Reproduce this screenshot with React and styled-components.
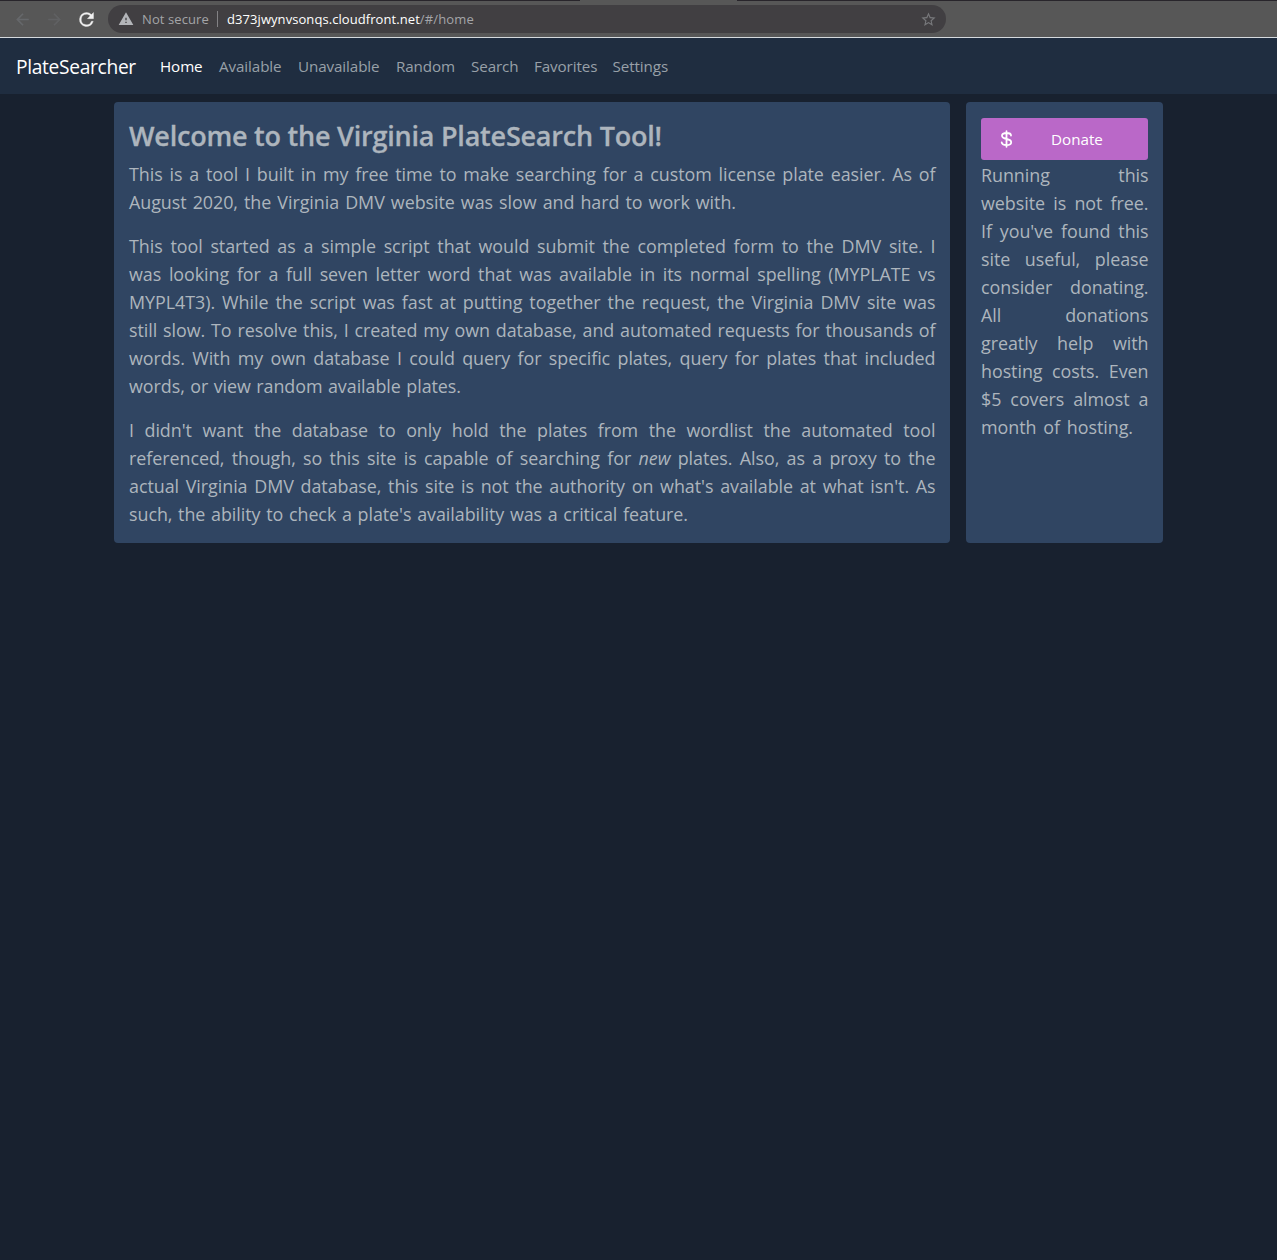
import React from "react";
import styled, { createGlobalStyle } from "styled-components";

const GlobalStyle = createGlobalStyle`
  *, *::before, *::after { box-sizing: border-box; }
  html { background: #18212f; }
  body {
    margin: 0;
    background: #18212f;
    color: #adb5bd;
    font-family: "Segoe UI", "Open Sans", "Noto Sans", sans-serif;
  }
`;

const Page = styled.div`
  min-height: 1260px;
`;

const Browser = styled.header`
  height: 38px;
  display: flex;
  flex-direction: column;
  background: #575757;
  border-bottom: 1px solid #d5dade;
`;

const TabEdge = styled.div`
  height: 1px;
  flex: none;
  background: linear-gradient(to right, #28252b 580px, #575757 580px 737px, #28252b 737px);
`;

const Toolbar = styled.div`
  flex: 1;
  display: flex;
  align-items: center;
  padding-left: 13px;
`;

const ToolIcon = styled.svg`
  display: block;
  flex: none;
  width: ${(p) => p.$size}px;
  height: ${(p) => p.$size}px;
  margin-right: ${(p) => p.$gap || 0}px;
  fill: ${(p) => p.$color};
`;

const AddressBar = styled.div`
  display: flex;
  align-items: center;
  width: 838px;
  height: 28px;
  padding: 0 9px 0 10px;
  border-radius: 14px;
  background: #413f42;
  color: #a4a5a8;
  font-size: 13px;
  line-height: 28px;
  white-space: nowrap;
`;

const Security = styled.span`
  width: 67px;
  letter-spacing: 0.1px;
`;

const Divider = styled.span`
  width: 1px;
  height: 16px;
  margin: 0 9px 0 8px;
  background: #838285;
`;

const Url = styled.span`
  flex: 1;
  letter-spacing: 0.15px;
`;

const Host = styled.span`
  color: #fff;
  letter-spacing: 0.07px;
`;

const Navbar = styled.nav`
  display: flex;
  align-items: center;
  height: 56px;
  padding: 0 16px;
  background: #1f2d40;
  white-space: nowrap;
`;

const Brand = styled.a`
  width: 120px;
  margin-right: 16px;
  padding-top: 1px;
  color: #fff;
  font-size: 19.2px;
  line-height: 30px;
  letter-spacing: -0.32px;
`;

const NavLink = styled.a`
  width: ${(p) => p.$width}px;
  padding: 0 8px;
  color: ${(p) => (p.$active ? "#fff" : "#98a0a8")};
  font-size: 15.2px;
  line-height: 24px;
  letter-spacing: -0.1px;
`;

const Container = styled.main`
  display: flex;
  gap: 16px;
  width: 1049px;
  height: 441px;
  margin: 8px 114px 0;
`;

const Card = styled.section`
  width: ${(p) => p.$width}px;
  padding: 16px 14.5px 15px 15px;
  border-radius: 4px;
  background: #304562;
`;

const Title = styled.h1`
  margin: 0 0 7px;
  padding-top: 1px;
  font-size: 27px;
  font-weight: 600;
  line-height: 34px;
  letter-spacing: -0.22px;
  white-space: nowrap;
  -webkit-text-stroke: 0.3px currentColor;
`;

const Paragraph = styled.p`
  margin: 0 0 16px;
  font-size: 17.9px;
  line-height: 28px;
  letter-spacing: -0.05px;
  word-spacing: -1.5px;
`;

const Line = styled.span`
  display: block;
  width: ${(p) => (p.$width ? `${p.$width}px` : "100%")};
  text-align: justify;
  text-align-last: justify;
`;

const DonateButton = styled.button`
  display: flex;
  align-items: center;
  width: 167px;
  height: 42px;
  margin: 0 0 1px;
  padding: 0 18px;
  border: 0;
  border-radius: 3px;
  background: #ba68c8;
  color: #fff;
  font: 400 15.2px/24px "Segoe UI", "Open Sans", "Noto Sans", sans-serif;
  letter-spacing: 0;
`;

const DollarIcon = styled.svg`
  display: block;
  width: 15px;
  height: 18px;
  margin-right: 37px;
  fill: none;
  stroke: #fff;
  stroke-width: 1.8;
  stroke-linecap: round;
`;

const links = [
  ["Home", 59],
  ["Available", 79],
  ["Unavailable", 98],
  ["Random", 75],
  ["Search", 63],
  ["Favorites", 78.5],
  ["Settings", 74],
];

const intro = [
  [
    ["This is a tool I built in my free time to make searching for a custom license plate easier. As of"],
    ["August 2020, the Virginia DMV website was slow and hard to work with.", 607],
  ],
  [
    ["This tool started as a simple script that would submit the completed form to the DMV site. I"],
    ["was looking for a full seven letter word that was available in its normal spelling (MYPLATE vs"],
    ["MYPL4T3). While the script was fast at putting together the request, the Virginia DMV site was"],
    ["still slow. To resolve this, I created my own database, and automated requests for thousands of"],
    ["words. With my own database I could query for specific plates, query for plates that included"],
    ["words, or view random available plates.", 332],
  ],
  [
    ["I didn't want the database to only hold the plates from the wordlist the automated tool"],
    [<>referenced, though, so this site is capable of searching for <em>new</em> plates. Also, as a proxy to the</>],
    ["actual Virginia DMV database, this site is not the authority on what's available at what isn't. As"],
    ["such, the ability to check a plate's availability was a critical feature.", 559],
  ],
];

const appeal = [
  ["Running this"],
  ["website is not free."],
  ["If you've found this"],
  ["site useful, please"],
  ["consider donating."],
  ["All donations"],
  ["greatly help with"],
  ["hosting costs. Even"],
  ["$5 covers almost a"],
  ["month of hosting.", 152],
];

function Lines({ lines }) {
  return (
    <Paragraph>
      {lines.map(([text, width], i) => (
        <Line key={i} $width={width}>{text}</Line>
      ))}
    </Paragraph>
  );
}

export default function App() {
  return (
    <Page>
      <GlobalStyle />
      <Browser>
        <TabEdge />
        <Toolbar>
          <ToolIcon viewBox="0 0 24 24" $size={19} $gap={13} $color="#66686b">
            <path d="M20 11H7.83l5.59-5.59L12 4l-8 8 8 8 1.41-1.41L7.83 13H20v-2z" />
          </ToolIcon>
          <ToolIcon viewBox="0 0 24 24" $size={19} $gap={11.5} $color="#606163">
            <path d="M12 4l-1.41 1.41L16.17 11H4v2h12.17l-5.58 5.59L12 20l8-8z" />
          </ToolIcon>
          <ToolIcon viewBox="0 0 24 24" $size={21} $gap={11.5} $color="#f1f1f1">
            <path d="M17.65 6.35A7.96 7.96 0 0 0 12 4a8 8 0 1 0 7.73 10h-2.08A6 6 0 1 1 12 6c1.66 0 3.14.69 4.22 1.78L13 11h7V4l-2.35 2.35z" stroke="#f1f1f1" strokeWidth="0.4" />
          </ToolIcon>
          <AddressBar>
            <ToolIcon viewBox="0 0 24 24" $size={16} $gap={8} $color="#b3b5b9">
              <path d="M1 21h22L12 2 1 21zm12-3h-2v-2h2v2zm0-4h-2v-4h2v4z" />
            </ToolIcon>
            <Security>Not secure</Security>
            <Divider />
            <Url><Host>d373jwynvsonqs.cloudfront.net</Host>/#/home</Url>
            <ToolIcon viewBox="0 0 24 24" $size={17} $color="#77787b">
              <path d="M22 9.24l-7.19-.62L12 2 9.19 8.63 2 9.24l5.46 4.73L5.82 21 12 17.27 18.18 21l-1.63-7.03L22 9.24zM12 15.4l-3.76 2.27 1-4.28-3.32-2.88 4.38-.38L12 6.1l1.71 4.04 4.38.38-3.32 2.88 1 4.28L12 15.4z" />
            </ToolIcon>
          </AddressBar>
        </Toolbar>
      </Browser>
      <Navbar>
        <Brand>PlateSearcher</Brand>
        {links.map(([label, width]) => (
          <NavLink key={label} $width={width} $active={label === "Home"}>{label}</NavLink>
        ))}
      </Navbar>
      <Container>
        <Card $width={836}>
          <Title>Welcome to the Virginia PlateSearch Tool!</Title>
          {intro.map((lines, i) => <Lines key={i} lines={lines} />)}
        </Card>
        <Card $width={197}>
          <DonateButton>
            <DollarIcon viewBox="0 0 15 18">
              <path d="M12 5.5C12 3.6 10 3 7.6 3S3 3.8 3 5.8c0 4.4 9.2 2 9.2 6.4 0 2.1-2.1 2.9-4.7 2.9S2.8 14.3 2.7 12.3M7.5 1.2v15.6" />
            </DollarIcon>
            Donate
          </DonateButton>
          <Lines lines={appeal} />
        </Card>
      </Container>
    </Page>
  );
}
